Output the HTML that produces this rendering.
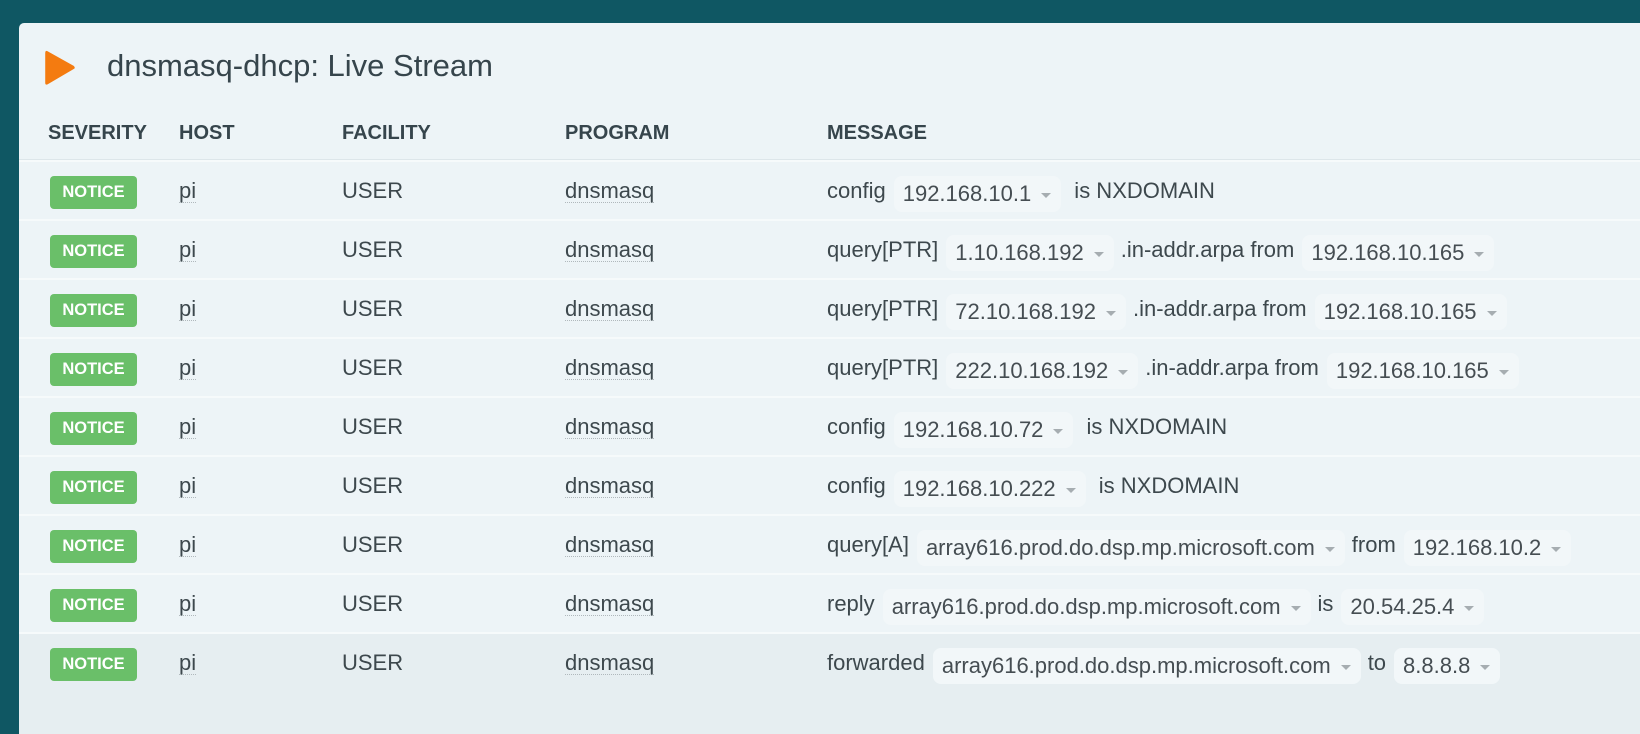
<!DOCTYPE html>
<html><head><meta charset="utf-8"><style>
body{margin:0;width:1640px;height:690px;background:#0f5763;overflow:hidden;font-family:"Liberation Sans",sans-serif;color:#3a4449}
.card{position:absolute;left:19px;top:23px;width:1640px;height:700px;background:#edf4f7;border-radius:5px}
.title{position:absolute;left:88px;top:25px;font-size:31px;color:#36454c}
.play{position:absolute;left:25px;top:26px}
.hdr{position:absolute;top:99px;font-weight:bold;font-size:20px;color:#36454c}
.hline{position:absolute;left:0;top:136px;width:100%;height:1px;background:#dde6ea}
.row{position:absolute;left:0;width:100%;height:57px;border-top:2px solid #f6fafb}
.row>div{position:absolute;top:0;line-height:57px;font-size:22px;color:#3d484d}
.badge{display:inline-block;background:#6abf69;color:#fff;font-weight:bold;font-size:16.5px;line-height:33px;width:87px;text-align:center;border-radius:4px;vertical-align:middle}
.dot{border-bottom:1px dotted #b0b8bc;line-height:22px;display:inline-block}
.pill{display:inline-block;background:#f2f7f9;border-radius:8px;padding:0 10px 0 9px;margin:0 7px 0 8px;line-height:36px;font-size:22px;color:#454d52;position:relative;top:3px}
.pill:after{content:"";display:inline-block;margin-left:10px;border-left:5px solid transparent;border-right:5px solid transparent;border-top:5px solid #a6adb1;vertical-align:middle}
</style></head><body>
<div class="card">
<svg class="play" width="32" height="38" viewBox="0 0 30 36"><path d="M3 2 Q1 1 1 4 L1 32 Q1 35 4 33 L28 19 Q30 18 28 16 Z" fill="#f47b10"/></svg>
<div class="title">dnsmasq-dhcp: Live Stream</div>
<div class="hdr" style="left:29px">SEVERITY</div>
<div class="hdr" style="left:160px">HOST</div>
<div class="hdr" style="left:323px">FACILITY</div>
<div class="hdr" style="left:546px">PROGRAM</div>
<div class="hdr" style="left:808px">MESSAGE</div>
<div class="hline"></div>
</div>
<div style="position:absolute;left:19px;top:160px;width:1621px">
<div class="row" style="top:0"><div style="left:31px"><span class="badge">NOTICE</span></div><div style="left:160px"><span class="dot">pi</span></div><div style="left:323px">USER</div><div style="left:546px"><span class="dot">dnsmasq</span></div><div style="left:808px">config<span class="pill">192.168.10.1</span> is NXDOMAIN</div></div>
<div class="row" style="top:59px"><div style="left:31px"><span class="badge">NOTICE</span></div><div style="left:160px"><span class="dot">pi</span></div><div style="left:323px">USER</div><div style="left:546px"><span class="dot">dnsmasq</span></div><div style="left:808px">query[PTR]<span class="pill">1.10.168.192</span>.in-addr.arpa from<span class="pill">192.168.10.165</span></div></div>
<div class="row" style="top:118px"><div style="left:31px"><span class="badge">NOTICE</span></div><div style="left:160px"><span class="dot">pi</span></div><div style="left:323px">USER</div><div style="left:546px"><span class="dot">dnsmasq</span></div><div style="left:808px">query[PTR]<span class="pill">72.10.168.192</span>.in-addr.arpa from<span class="pill">192.168.10.165</span></div></div>
<div class="row" style="top:177px"><div style="left:31px"><span class="badge">NOTICE</span></div><div style="left:160px"><span class="dot">pi</span></div><div style="left:323px">USER</div><div style="left:546px"><span class="dot">dnsmasq</span></div><div style="left:808px">query[PTR]<span class="pill">222.10.168.192</span>.in-addr.arpa from<span class="pill">192.168.10.165</span></div></div>
<div class="row" style="top:236px"><div style="left:31px"><span class="badge">NOTICE</span></div><div style="left:160px"><span class="dot">pi</span></div><div style="left:323px">USER</div><div style="left:546px"><span class="dot">dnsmasq</span></div><div style="left:808px">config<span class="pill">192.168.10.72</span> is NXDOMAIN</div></div>
<div class="row" style="top:295px"><div style="left:31px"><span class="badge">NOTICE</span></div><div style="left:160px"><span class="dot">pi</span></div><div style="left:323px">USER</div><div style="left:546px"><span class="dot">dnsmasq</span></div><div style="left:808px">config<span class="pill">192.168.10.222</span> is NXDOMAIN</div></div>
<div class="row" style="top:354px"><div style="left:31px"><span class="badge">NOTICE</span></div><div style="left:160px"><span class="dot">pi</span></div><div style="left:323px">USER</div><div style="left:546px"><span class="dot">dnsmasq</span></div><div style="left:808px;white-space:nowrap">query[A]<span class="pill">array616.prod.do.dsp.mp.microsoft.com</span>from<span class="pill">192.168.10.2</span></div></div>
<div class="row" style="top:413px"><div style="left:31px"><span class="badge">NOTICE</span></div><div style="left:160px"><span class="dot">pi</span></div><div style="left:323px">USER</div><div style="left:546px"><span class="dot">dnsmasq</span></div><div style="left:808px;white-space:nowrap">reply<span class="pill">array616.prod.do.dsp.mp.microsoft.com</span>is<span class="pill">20.54.25.4</span></div></div>
<div class="row" style="top:472px;height:100px;background:#e6eef1"><div style="left:31px"><span class="badge">NOTICE</span></div><div style="left:160px"><span class="dot">pi</span></div><div style="left:323px">USER</div><div style="left:546px"><span class="dot">dnsmasq</span></div><div style="left:808px;white-space:nowrap">forwarded<span class="pill">array616.prod.do.dsp.mp.microsoft.com</span>to<span class="pill">8.8.8.8</span></div></div>
</div>
</body></html>
